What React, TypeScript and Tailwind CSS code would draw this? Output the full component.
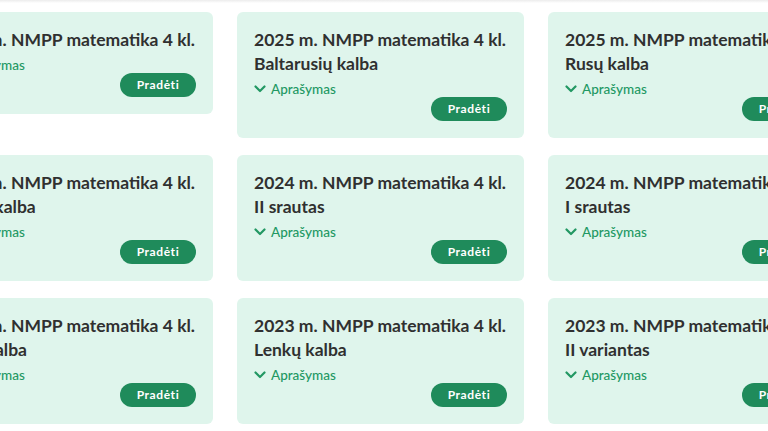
import React from 'react';

interface Test {
  year: string;
  variant: string;
}

const tests: Test[] = [
  { year: '2025', variant: '' },
  { year: '2025', variant: 'Baltarusių kalba' },
  { year: '2025', variant: 'Rusų kalba' },
  { year: '2024', variant: 'Lenkų kalba' },
  { year: '2024', variant: 'II srautas' },
  { year: '2024', variant: 'I srautas' },
  { year: '2023', variant: 'Rusų kalba' },
  { year: '2023', variant: 'Lenkų kalba' },
  { year: '2023', variant: 'II variantas' },
];

function Chevron() {
  return (
    <svg width="12" height="12" viewBox="0 0 12 12" fill="none" className="shrink-0">
      <path d="M1.5 3.5l4.5 4.5 4.5-4.5" stroke="currentColor" strokeWidth="2.2" strokeLinecap="round" strokeLinejoin="round" />
    </svg>
  );
}

function TestCard({ test }: { test: Test }) {
  return (
    <div className="flex flex-col rounded-md bg-[#dff5ec] px-[17px] pt-4 pb-[17px]">
      <h3 className="text-[17.5px] leading-6 font-bold whitespace-nowrap text-[#303030]">
        <span className="block">{test.year} m. NMPP matematika 4 kl.</span>
        {test.variant && <span className="block">{test.variant}</span>}
      </h3>
      <button className="mt-1 flex h-[18px] items-center gap-[5px] text-[13.5px] font-medium text-[#229863]">
        <Chevron />
        <span>Aprašymas</span>
      </button>
      <div className="-mt-px flex justify-end">
        <button className="h-6 w-[76px] rounded-full bg-[#1f8b5b] text-[12px] font-bold tracking-[0.6px] text-white">
          Pradėti
        </button>
      </div>
    </div>
  );
}

export default function App() {
  return (
    <div className="h-[431px] w-[768px] overflow-hidden bg-white font-['Lato',sans-serif]">
      <div className="h-[3px] bg-linear-to-b from-[#ececec] to-white" />
      <div className="ml-[-74px] grid w-[909px] grid-cols-[287px_287px_287px] items-start gap-x-6 gap-y-[17px] pt-[9px]">
        {tests.map((t, i) => (
          <TestCard key={i} test={t} />
        ))}
      </div>
    </div>
  );
}
